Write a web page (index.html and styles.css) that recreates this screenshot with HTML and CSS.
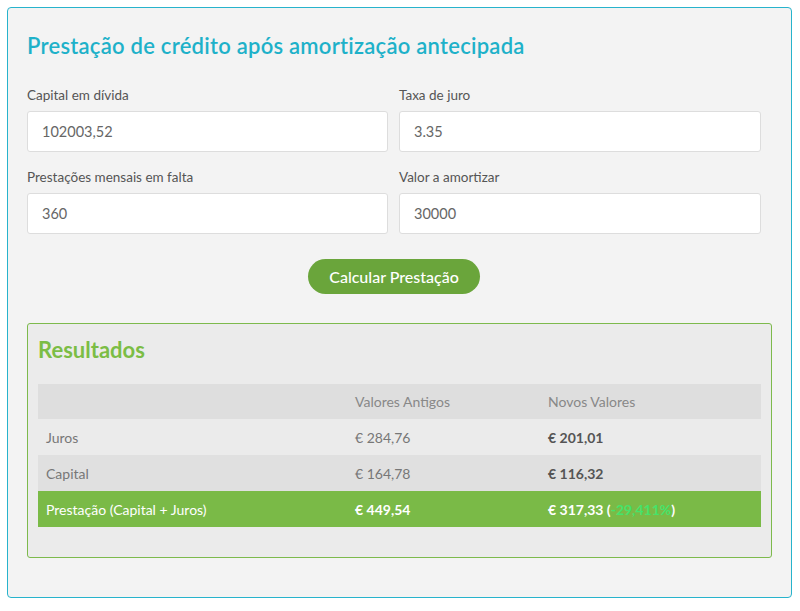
FILE: index.html
```html
<!DOCTYPE html>
<html lang="pt">
<head>
<meta charset="utf-8">
<meta name="viewport" content="width=device-width, initial-scale=1">
<title>Prestação de crédito após amortização antecipada</title>
<link rel="stylesheet" href="styles.css">
</head>
<body>

<div class="calc">
  <h1 class="ttl">Prestação de crédito após amortização antecipada</h1>

  <div class="fields">
    <div class="fld">
      <label>Capital em dívida</label>
      <input type="text" value="102003,52">
    </div>
    <div class="fld">
      <label>Taxa de juro</label>
      <input type="text" value="3.35">
    </div>
    <div class="fld">
      <label>Prestações mensais em falta</label>
      <input type="text" value="360">
    </div>
    <div class="fld">
      <label>Valor a amortizar</label>
      <input type="text" value="30000">
    </div>
  </div>

  <p class="act"><button type="button" class="btn">Calcular Prestação</button></p>

  <div class="res">
    <h2>Resultados</h2>
    <table class="tbres">
      <tr class="hd">
        <td class="c1"></td><td class="c2">Valores Antigos</td><td class="c3">Novos Valores</td>
      </tr>
      <tr>
        <td>Juros</td><td>€ 284,76</td><td><b>€ 201,01</b></td>
      </tr>
      <tr class="alt">
        <td>Capital</td><td>€ 164,78</td><td><b>€ 116,32</b></td>
      </tr>
      <tr class="tot">
        <td>Prestação (Capital + Juros)</td><td><b>€ 449,54</b></td><td><b>€ 317,33 (<i class="pct">-29,411%</i>)</b></td>
      </tr>
    </table>
  </div>
</div>

</body>
</html>
```

FILE: styles.css
```css
body { margin:0; background:#fff; font-family:"Lato","Open Sans","DejaVu Sans",sans-serif; color:#555; }
.calc { width:745px; margin:7px 0 0 7px; padding:26px 19px 39px 19px; background:#f3f3f3; border:1px solid #27b3cc; border-radius:4px; }
h1.ttl { margin:0; font-size:22px; line-height:24px; font-weight:600; letter-spacing:0.25px; color:#1eb1c9; }

.fields { display:grid; grid-template-columns:361px 362px; column-gap:11px; row-gap:16px; margin:28px 0 0 0; width:734px; }
.fld label { display:block; font-size:13.5px; line-height:18px; color:#555; margin-bottom:7px; }
.fld input { display:block; box-sizing:border-box; width:100%; height:41px; padding:0 14px; border:1px solid #ddd; border-radius:3px; background:#fff; font-family:inherit; font-size:14.5px; color:#666; outline:none; }

p.act { margin:25px 0 0 0; width:734px; text-align:center; }
.btn { height:35px; padding:0 21px; border:0; border-radius:18px; background:#6aa53b; color:#fff; font-family:inherit; font-size:16px; font-weight:500; cursor:pointer; }

.res { margin-top:29px; padding:14px 10px 30px 10px; background:#ebebeb; border:1px solid #7dba4c; border-radius:3px; }
.res h2 { margin:0 0 22px 0; font-size:22px; line-height:24px; font-weight:700; color:#7bbd45; }

table.tbres { width:100%; border-collapse:collapse; font-size:14px; }
table.tbres td { height:36px; padding:0 8px; color:#777; text-align:left; white-space:nowrap; }
table.tbres tr.hd td { height:35px; background:#dedede; color:#888; }
table.tbres tr.alt td { background:#e0e0e0; }
table.tbres tr.tot td { background:#7aba47; color:#fff; }
td.c1 { width:293px; }
td.c2 { width:177px; }
b { font-weight:700; color:#555; }
tr.tot b { color:#fff; }
i.pct { font-style:normal; color:#45e36a; }
```
